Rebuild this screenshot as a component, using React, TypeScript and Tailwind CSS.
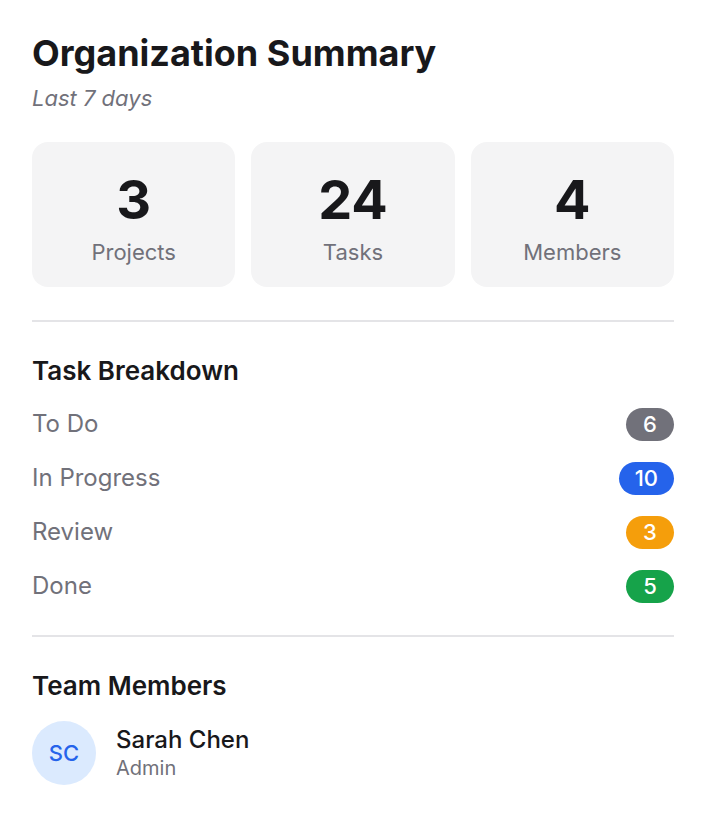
import React from 'react';

const stats = [
  { value: '3', label: 'Projects' },
  { value: '24', label: 'Tasks' },
  { value: '4', label: 'Members' },
];

const breakdown = [
  { label: 'To Do', count: 6, color: 'bg-[#71717a]' },
  { label: 'In Progress', count: 10, color: 'bg-[#2563eb]' },
  { label: 'Review', count: 3, color: 'bg-[#f59e0b]' },
  { label: 'Done', count: 5, color: 'bg-[#16a34a]' },
];

function StatCard({ value, label }: { value: string; label: string }): JSX.Element {
  return (
    <div className="flex h-[145px] flex-col items-center rounded-2xl bg-[#f4f4f5] pt-[28px]">
      <div className="text-[54px] font-bold leading-[60px] text-[#18181b]">{value}</div>
      <div className="mt-2 text-[22px] leading-[28px] text-[#71717a]">{label}</div>
    </div>
  );
}

export default function App(): JSX.Element {
  return (
    <div className="min-h-screen bg-white font-['Inter',sans-serif]">
      <div className="px-8 pt-[33px] pb-8">
        <h1 className="text-[36px] font-bold leading-[40px] text-[#18181b]">Organization Summary</h1>
        <p className="mt-[11px] text-[22px] italic leading-[28px] text-[#71717a]">Last 7 days</p>

        <div className="mt-[30px] grid grid-cols-3 gap-4">
          {stats.map((s) => (
            <StatCard key={s.label} value={s.value} label={s.label} />
          ))}
        </div>

        <div className="mt-[33px] h-[2px] bg-[#e4e4e7]" />

        <h2 className="mt-[33px] text-[26px] font-semibold leading-[32px] text-[#18181b]">Task Breakdown</h2>
        <div className="mt-[10px]">
          {breakdown.map((b) => (
            <div key={b.label} className="flex h-[54px] items-center justify-between">
              <span className="text-[24px] text-[#71717a]">{b.label}</span>
              <span
                className={`flex h-[33px] min-w-[48px] items-center justify-center rounded-full px-4 text-[22px] font-medium text-white ${b.color}`}
              >
                {b.count}
              </span>
            </div>
          ))}
        </div>

        <div className="mt-[22px] h-[2px] bg-[#e4e4e7]" />

        <h2 className="mt-[33px] text-[26px] font-semibold leading-[32px] text-[#18181b]">Team Members</h2>
        <div className="mt-[19px] flex items-center gap-5">
          <div className="flex h-16 w-16 items-center justify-center rounded-full bg-[#dbeafe] text-[22px] font-medium text-[#2563eb]">
            SC
          </div>
          <div>
            <div className="text-[24px] font-medium leading-[30px] text-[#18181b]">Sarah Chen</div>
            <div className="text-[20px] leading-[26px] text-[#71717a]">Admin</div>
          </div>
        </div>
      </div>
    </div>
  );
}
